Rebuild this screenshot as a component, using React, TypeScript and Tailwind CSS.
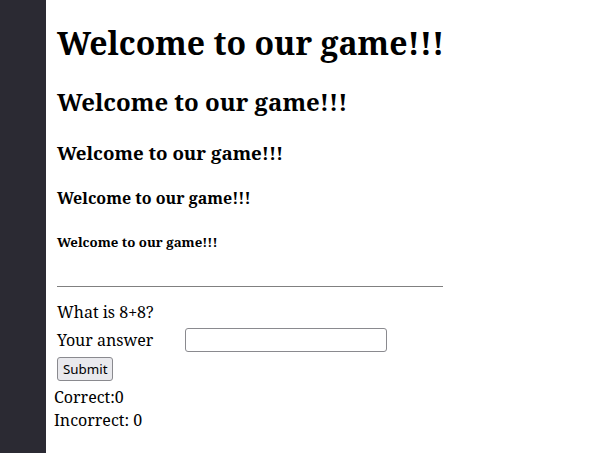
export default function App() {
    return (
        <div className="flex min-h-[453px] bg-white font-['Noto_Serif',serif] text-black">
            <aside className="w-[46px] shrink-0 bg-[#2b2a33]" />
            <main className="flex-1 pl-2">
                <div className="pl-[3px]">
                    <h1 className="mt-[20.8px] text-[32px] font-bold leading-[normal]">Welcome to our game!!!</h1>
                    <h2 className="mt-[21.6px] text-[24px] font-bold leading-[normal]">Welcome to our game!!!</h2>
                    <h3 className="mt-[22px] text-[18.72px] font-bold leading-[normal]">Welcome to our game!!!</h3>
                    <h4 className="mt-[21.7px] text-[16px] font-bold leading-[normal]">Welcome to our game!!!</h4>
                    <h5 className="mt-[23.8px] text-[13.28px] font-bold leading-[normal]">Welcome to our game!!!</h5>
                    <hr className="mt-[35.4px] w-[386px] border-t border-[#808080]" />
                    <form className="text-[16px] leading-[normal]">
                        <p className="mt-[14.1px]">What is 8+8?</p>
                        <div className="mt-[4.6px] flex items-center">
                            <label className="w-[128px]">Your answer</label>
                            <input
                                type="text"
                                className="h-[24px] w-[202px] rounded-[3px] border border-[#8a8a8f] bg-white px-1"
                            />
                        </div>
                        <button
                            type="submit"
                            className="mt-[5.2px] h-[24px] rounded-[3px] border border-[#8a8a8f] bg-[#e9e9ed] px-[5px] font-['Noto_Sans',sans-serif] text-[13.33px] leading-[normal]"
                        >
                            Submit
                        </button>
                    </form>
                </div>
                <p className="mt-[4.4px] text-[16px] leading-[normal]">Correct:0</p>
                <p className="mt-[1.4px] text-[16px] leading-[normal]">Incorrect: 0</p>
            </main>
        </div>
    )
}
